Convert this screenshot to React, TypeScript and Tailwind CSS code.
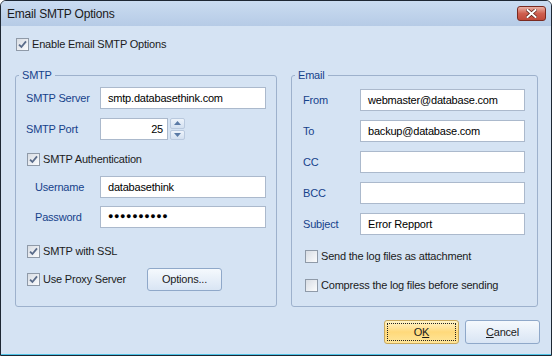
import type { ReactNode } from "react";

const font = "font-['Liberation_Sans',Arial,sans-serif]";

function Check({ checked }: { checked?: boolean }) {
  return (
    <span className="relative flex h-[13px] w-[13px] shrink-0 items-center justify-center border border-[#8f9aa8] bg-gradient-to-br from-[#d8dde4] to-[#fbfcfd]">
      {checked && (
        <svg width="9" height="9" viewBox="0 0 9 9" aria-hidden="true">
          <path
            d="M1 4.6 L3.4 7 L8 1.4"
            fill="none"
            stroke="#5a6c8a"
            strokeWidth="1.8"
          />
        </svg>
      )}
    </span>
  );
}

function CheckRow({
  checked,
  label,
  className,
}: {
  checked?: boolean;
  label: string;
  className?: string;
}) {
  return (
    <div className={`flex items-center gap-[3px] text-[#1b1b1b] ${className ?? ""}`}>
      <Check checked={checked} />
      <span className="leading-[13px]">{label}</span>
    </div>
  );
}

function Field({
  children,
  className,
  align = "left",
}: {
  children?: ReactNode;
  className?: string;
  align?: "left" | "right";
}) {
  return (
    <div
      className={`flex h-[22px] items-center border border-[#abb9cc] bg-white px-[7px] text-black ${
        align === "right" ? "justify-end" : ""
      } ${className ?? ""}`}
    >
      {children}
    </div>
  );
}

function Group({
  title,
  className,
  children,
}: {
  title: string;
  className?: string;
  children: ReactNode;
}) {
  return (
    <div
      className={`relative flex h-[232px] flex-col rounded-[3px] border border-[#9db1cc] ${className ?? ""}`}
    >
      <span className="absolute -top-[8px] left-[3px] bg-[#d5e3f3] px-[3px] leading-[14px] text-[#15428b]">
        {title}
      </span>
      {children}
    </div>
  );
}

function LabelRow({
  label,
  labelWidth,
  children,
  className,
}: {
  label: string;
  labelWidth: string;
  children: ReactNode;
  className?: string;
}) {
  return (
    <div className={`flex items-center ${className ?? ""}`}>
      <span className={`${labelWidth} shrink-0 text-[#15428b]`}>{label}</span>
      {children}
    </div>
  );
}

export default function App() {
  return (
    <div
      className={`${font} flex h-[356px] w-[552px] flex-col overflow-hidden rounded-t-[6px] border border-[#1d2733] bg-[#d5e3f3] text-[11px] tracking-[-0.2px]`}
    >
      {/* title bar */}
      <div className="flex h-[25px] shrink-0 items-center justify-between bg-gradient-to-b from-[#cadcf1] to-[#b6cbe6] pl-[6px] pr-[5px]">
        <span className="text-[12px] text-[#1a1a1a]">Email SMTP Options</span>
        <button className="flex h-[15px] w-[29px] items-center justify-center rounded-[3px] border border-[#7a2a20] bg-gradient-to-b from-[#e9b1a6] via-[#cf5f4f] to-[#c0493a]">
          <svg width="11" height="9" viewBox="0 0 11 9" aria-hidden="true">
            <path
              d="M1.5 1 L9.5 8 M9.5 1 L1.5 8"
              stroke="#5a2018"
              strokeWidth="3.4"
              strokeLinecap="square"
            />
            <path
              d="M1.5 1 L9.5 8 M9.5 1 L1.5 8"
              stroke="#ffffff"
              strokeWidth="2"
              strokeLinecap="square"
            />
          </svg>
        </button>
      </div>

      {/* body */}
      <div className="flex flex-1 flex-col border-b border-[#4fc3e6] pl-[14px] pr-[13px]">
        <CheckRow checked label="Enable Email SMTP Options" className="ml-[1px] mt-[12px]" />

        <div className="mt-[24px] flex gap-[14px]">
          <Group title="SMTP" className="w-[262px]">
            <LabelRow label="SMTP Server" labelWidth="w-[74px]" className="ml-[10px] mt-[11px]">
              <Field className="w-[166px]">smtp.databasethink.com</Field>
            </LabelRow>
            <LabelRow label="SMTP Port" labelWidth="w-[74px]" className="ml-[10px] mt-[9px]">
              <Field className="w-[68px] pr-[4px]" align="right">
                25
              </Field>
              <div className="ml-[2px] flex h-[22px] w-[15px] flex-col gap-[1px]">
                <span className="flex flex-1 items-center justify-center rounded-[2px] border border-[#b9c9de] bg-gradient-to-b from-[#eef4fb] to-[#d3e0f0]">
                  <svg width="7" height="4" viewBox="0 0 7 4" aria-hidden="true">
                    <path d="M0 4 L3.5 0 L7 4 Z" fill="#5a7aa6" />
                  </svg>
                </span>
                <span className="flex flex-1 items-center justify-center rounded-[2px] border border-[#b9c9de] bg-gradient-to-b from-[#eef4fb] to-[#d3e0f0]">
                  <svg width="7" height="4" viewBox="0 0 7 4" aria-hidden="true">
                    <path d="M0 0 L7 0 L3.5 4 Z" fill="#5a7aa6" />
                  </svg>
                </span>
              </div>
            </LabelRow>
            <CheckRow checked label="SMTP Authentication" className="ml-[11px] mt-[13px]" />
            <LabelRow label="Username" labelWidth="w-[65px]" className="ml-[19px] mt-[10px]">
              <Field className="w-[166px]">databasethink</Field>
            </LabelRow>
            <LabelRow label="Password" labelWidth="w-[65px]" className="ml-[19px] mt-[8px]">
              <Field className="w-[166px] text-[9px] tracking-[0.6px]">●●●●●●●●●●</Field>
            </LabelRow>
            <CheckRow checked label="SMTP with SSL" className="ml-[11px] mt-[17px]" />
            <div className="ml-[11px] mt-[10px] flex h-[23px] items-center">
              <CheckRow checked label="Use Proxy Server" className="w-[120px]" />
              <button className="h-[23px] w-[75px] rounded-[3px] border border-[#8fa8c9] bg-gradient-to-b from-[#f5f9fd] to-[#d9e5f4] text-[#1b1b1b]">
                Options...
              </button>
            </div>
          </Group>

          <Group title="Email" className="w-[247px]">
            <div className="ml-[11px] mt-[13px] flex flex-col gap-[9px]">
              {[
                ["From", "webmaster@database.com"],
                ["To", "backup@database.com"],
                ["CC", ""],
                ["BCC", ""],
                ["Subject", "Error Repport"],
              ].map(([label, value]) => (
                <LabelRow key={label} label={label} labelWidth="w-[57px]">
                  <Field className="w-[165px]">{value}</Field>
                </LabelRow>
              ))}
            </div>
            <CheckRow label="Send the log files as attachment" className="ml-[13px] mt-[15px]" />
            <CheckRow label="Compress the log files before sending" className="ml-[13px] mt-[16px]" />
          </Group>
        </div>

        <div className="mr-[-2px] mt-[13px] flex justify-end gap-[6px]">
          <button className="flex h-[24px] w-[75px] items-center justify-center rounded-[3px] border border-[#c9a85c] bg-gradient-to-b from-[#fff4c8] via-[#ffd97a] to-[#ffe69a] p-[2px] text-[#1b1b1b]">
            <span className="flex h-full w-full items-center justify-center border border-dotted border-[#222]">
              O<span className="underline">K</span>
            </span>
          </button>
          <button className="h-[24px] w-[75px] rounded-[3px] border border-[#8fa8c9] bg-gradient-to-b from-[#f5f9fd] to-[#d9e5f4] text-[#1b1b1b]">
            <span className="underline">C</span>ancel
          </button>
        </div>
      </div>
    </div>
  );
}
